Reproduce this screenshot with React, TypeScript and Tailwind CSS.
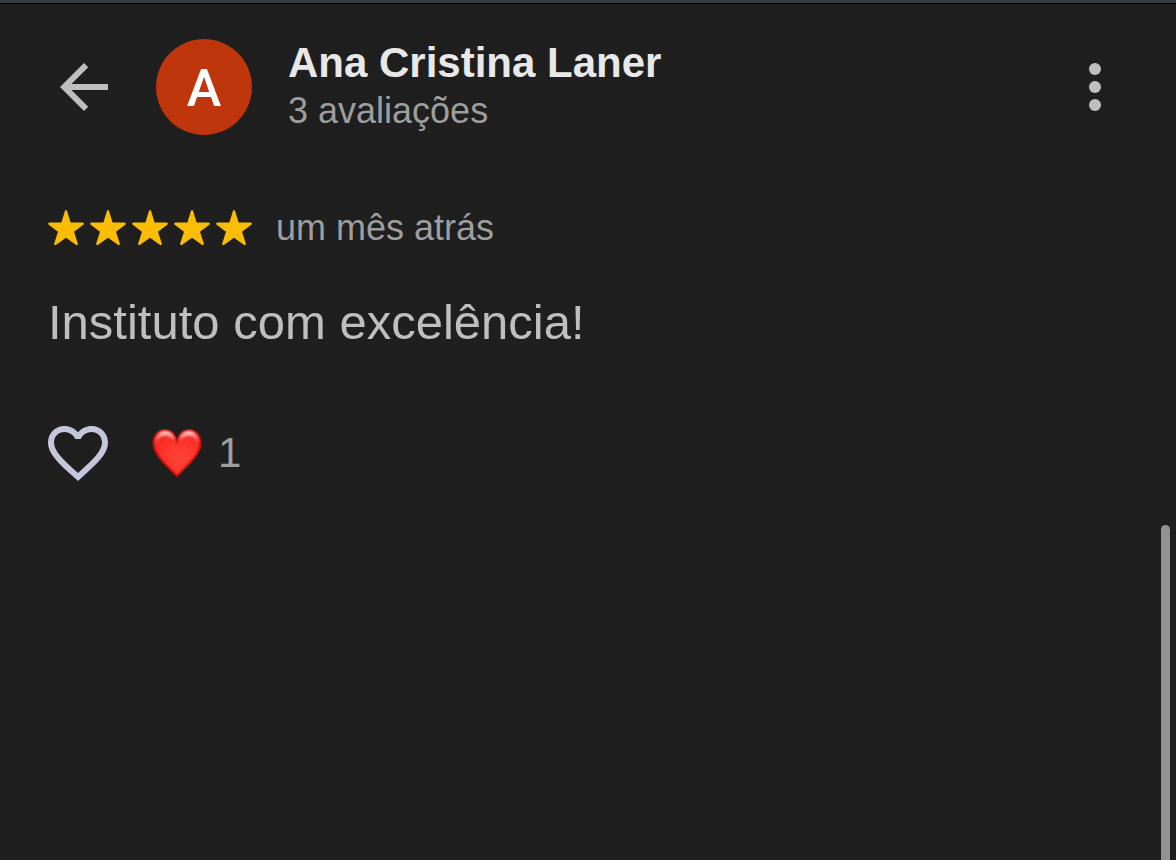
interface Review {
  author: string;
  initial: string;
  reviewCount: string;
  rating: number;
  date: string;
  text: string;
  likes: number;
}

const review: Review = {
  author: "Ana Cristina Laner",
  initial: "A",
  reviewCount: "3 avaliações",
  rating: 5,
  date: "um mês atrás",
  text: "Instituto com excelência!",
  likes: 1,
};

function BackIcon() {
  return (
    <svg viewBox="0 0 24 24" className="size-18" fill="currentColor" aria-hidden="true">
      <path d="M20 11H7.83l5.59-5.59L12 4l-8 8 8 8 1.41-1.41L7.83 13H20v-2z" />
    </svg>
  );
}

function MoreIcon() {
  return (
    <svg viewBox="0 0 24 24" className="size-18" fill="currentColor" aria-hidden="true">
      <circle cx="12" cy="6" r="2" />
      <circle cx="12" cy="12" r="2" />
      <circle cx="12" cy="18" r="2" />
    </svg>
  );
}

function StarIcon() {
  return (
    <svg viewBox="0 0 36 36" className="size-9" fill="currentColor" aria-hidden="true">
      <path d="M17 .8q1-1.400 2 0L22.600 12.600H34.700q2 .6.600 2.200L26 21.800l3.900 11.900q0 1.800-1.700 1.200L18 27.800 7.800 34.900q-1.700.6-1.700-1.200L10 21.800.7 14.800q-1.400-1.600.6-2.200H13.400z" />
    </svg>
  );
}

function HeartOutlineIcon() {
  return (
    <svg viewBox="0 0 24 24" className="size-18" fill="currentColor" aria-hidden="true">
      <path d="M16.5 3c-1.74 0-3.41.81-4.5 2.09C10.91 3.81 9.24 3 7.5 3 4.42 3 2 5.42 2 8.5c0 3.78 3.4 6.86 8.55 11.54L12 21.35l1.45-1.32C18.6 15.36 22 12.28 22 8.5 22 5.42 19.58 3 16.5 3zm-4.4 15.55l-.1.1-.1-.1C7.14 14.24 4 11.39 4 8.5 4 6.5 5.5 5 7.5 5c1.54 0 3.04.99 3.57 2.36h1.87C13.46 5.99 14.96 5 16.5 5c2 0 3.5 1.5 3.5 3.5 0 2.89-3.14 5.74-7.9 10.05z" />
    </svg>
  );
}

const HEART =
  "M25 11C23 4.500 18.500 1 13 1 6 1 .5 6.500 .5 15 .5 27 13 37 25 49.500 37 37 49.500 27 49.500 15 49.500 6.500 44 1 37 1 31.500 1 27 4.500 25 11z";

function RedHeart() {
  return (
    <svg viewBox="0 0 50 50" className="size-[50px]" aria-hidden="true">
      <defs>
        <radialGradient id="heart-fill" cx="28" cy="30" r="30" gradientUnits="userSpaceOnUse">
          <stop offset="0" stopColor="#ff4437" />
          <stop offset="0.5" stopColor="#fe372d" />
          <stop offset="1" stopColor="#f4261d" />
        </radialGradient>
        <linearGradient id="heart-shine" x1="0" y1="2" x2="0" y2="17" gradientUnits="userSpaceOnUse">
          <stop offset="0" stopColor="#fff" stopOpacity="0.95" />
          <stop offset="0.35" stopColor="#fff" stopOpacity="0.5" />
          <stop offset="1" stopColor="#fff" stopOpacity="0" />
        </linearGradient>
        <clipPath id="heart-clip">
          <path d={HEART} />
        </clipPath>
        <filter id="heart-soft" x="-20%" y="-20%" width="140%" height="140%">
          <feGaussianBlur stdDeviation="1" />
        </filter>
      </defs>
      <g clipPath="url(#heart-clip)">
        <path d={HEART} fill="url(#heart-fill)" />
        <path d={HEART} fill="none" stroke="#a80500" strokeWidth="3" filter="url(#heart-soft)" />
        <path
          d="M3 19C2 9 7 3 13 3c5 0 9 3 11 10-4-3-7-5-11-5-5 0-9 4-10 11zM47 19C48 9 43 3 37 3c-5 0-9 3-11 10 4-3 7-5 11-5 5 0 9 4 10 11z"
          fill="url(#heart-shine)"
          filter="url(#heart-soft)"
        />
      </g>
    </svg>
  );
}

export default function App() {
  return (
    <div className="relative min-h-screen overflow-hidden border-t-3 border-[#363b3f] bg-[#1f1f1f] font-['Liberation_Sans',Arial,sans-serif]">
      <div className="h-px bg-black" />

      <header className="flex items-center gap-9 pt-[35px] pr-[45px] pl-12">
        <button type="button" aria-label="Voltar" className="text-[#bfbfbf]">
          <BackIcon />
        </button>
        <div className="flex size-24 shrink-0 items-center justify-center rounded-full bg-[#bf360c] pt-1 font-[Roboto,sans-serif] text-[52px] leading-none font-medium text-white">
          {review.initial}
        </div>
        <div className="min-w-0 flex-1">
          <h1 className="text-[42px] leading-12 font-bold text-[#e8e8e8]">{review.author}</h1>
          <p className="text-[36px] leading-12 text-[#9e9e9e]">{review.reviewCount}</p>
        </div>
        <button type="button" aria-label="Mais opções" className="text-[#bfbfbf]">
          <MoreIcon />
        </button>
      </header>

      <main className="px-12 pt-[69px]">
        <div className="flex items-center gap-6">
          <div className="flex gap-1.5 text-[#fbbc04]" role="img" aria-label="5 de 5 estrelas">
            {Array.from({ length: review.rating }, (_, i) => (
              <StarIcon key={i} />
            ))}
          </div>
          <span className="text-[36px] leading-12 text-[#9e9e9e]">{review.date}</span>
        </div>

        <p className="pt-[34px] text-[49px] leading-18 text-[#bfbfbf]">{review.text}</p>

        <div className="-ml-1.5 flex items-center gap-[38px] pt-[59px]">
          <button type="button" aria-label="Curtir" className="text-[#c4c7dc]">
            <HeartOutlineIcon />
          </button>
          <button type="button" aria-label="Ver curtidas" className="flex items-center gap-4">
            <RedHeart />
            <span className="text-[42px] leading-12 text-[#9e9e9e]">{review.likes}</span>
          </button>
        </div>
      </main>

      {/* overlay scrollbar thumb */}
      <div className="absolute top-[522px] right-1.5 bottom-0 w-[9px] rounded-t-full bg-[#929292]" />
    </div>
  );
}
